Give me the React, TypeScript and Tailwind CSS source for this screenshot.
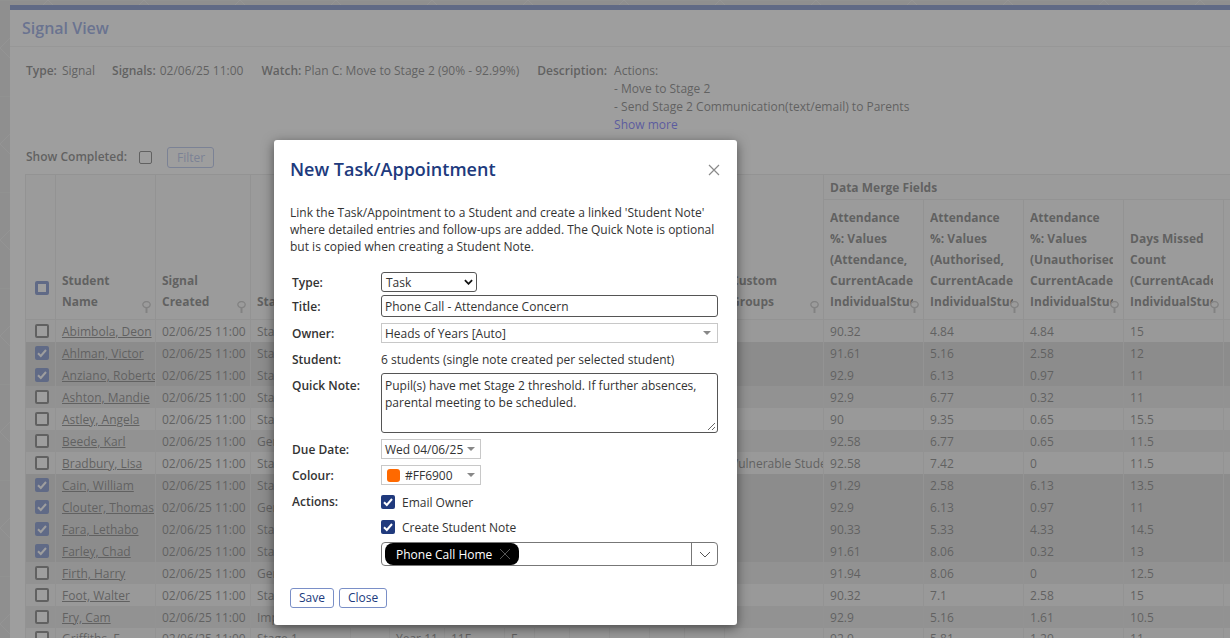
import type { ReactNode } from "react";

const rows: [string, string, string, string, string, string, boolean, string?][] = [
  ["Abimbola, Deon", "Stage 2", "90.32", "4.84", "4.84", "15", false],
  ["Ahlman, Victor", "Stage 2", "91.61", "5.16", "2.58", "12", true],
  ["Anziano, Roberto", "Stage 2", "92.9", "6.13", "0.97", "11", true],
  ["Ashton, Mandie", "Stage 2", "92.9", "6.77", "0.32", "11", false],
  ["Astley, Angela", "Stage 2", "90", "9.35", "0.65", "15.5", false],
  ["Beede, Karl", "General", "92.58", "6.77", "0.65", "11.5", false],
  ["Bradbury, Lisa", "Stage 2", "92.58", "7.42", "0", "11.5", false, "Vulnerable Students"],
  ["Cain, William", "Stage 2", "91.29", "2.58", "6.13", "13.5", true],
  ["Clouter, Thomas", "General", "92.9", "6.13", "0.97", "11", true],
  ["Fara, Lethabo", "Stage 2", "90.33", "5.33", "4.33", "14.5", true],
  ["Farley, Chad", "Stage 2", "91.61", "8.06", "0.32", "13", true],
  ["Firth, Harry", "General", "91.94", "8.06", "0", "12.5", false],
  ["Foot, Walter", "Stage 2", "90.32", "7.1", "2.58", "15", false],
  ["Fry, Cam", "Impact", "92.9", "5.16", "1.61", "10.5", false],
  ["Griffiths, F", "Stage 1", "92.9", "5.81", "1.29", "11", false],
];

const line = "border-[#d9d9d9]";

function Pin() {
  return (
    <svg viewBox="0 0 9 12" className="absolute right-[4px] bottom-[6px] h-[12px] w-[9px]">
      <ellipse cx="4.5" cy="3.6" rx="3.7" ry="3" fill="#f5f5f5" stroke="#a0a0a0" strokeWidth="1.3" />
      <path d="M4.5 7V12" stroke="#a0a0a0" strokeWidth="2" />
    </svg>
  );
}

function Check({ on, table = false }: { on: boolean; table?: boolean }) {
  return on ? (
    <span className={`${table ? "ml-[9px] bg-[#2f50b0]" : "bg-[#203a7d]"} flex h-[14px] w-[14px] shrink-0 items-center justify-center rounded-[2px]`}>
      <svg viewBox="0 0 14 14" className="h-[14px] w-[14px]">
        <path d="M3 7.2L5.8 10L11 4" fill="none" stroke="#fff" strokeWidth="2" />
      </svg>
    </span>
  ) : (
    <span className={`${table ? "ml-[9px]" : ""} block h-[14px] w-[14px] rounded-[2px] border-2 border-[#333] bg-white`} />
  );
}

function HeadCell({ children, rowSpan, pin = true }: { children?: ReactNode; rowSpan?: number; pin?: boolean }) {
  return (
    <th rowSpan={rowSpan} className={`relative border ${line} pb-[7px] pl-[6px] pr-[10px] text-left align-bottom font-bold whitespace-nowrap`}>
      <div className="overflow-hidden">{children}</div>
      {pin && <Pin />}
    </th>
  );
}

function Cell({ children }: { children?: ReactNode }) {
  return <td className={`overflow-hidden whitespace-nowrap border-x ${line} px-[6px] pt-[2px]`}>{children}</td>;
}

function Caret() {
  return <span className="h-0 w-0 border-x-[4px] border-t-[4px] border-x-transparent border-t-[#888]" />;
}

function Field({ label, className = "", children }: { label: string; className?: string; children: ReactNode }) {
  return (
    <div className={`flex items-center ${className}`}>
      <b className="w-[89px] shrink-0 font-semibold">{label}</b>
      <div className="w-[337px]">{children}</div>
    </div>
  );
}

export default function App() {
  return (
    <div className="relative h-[638px] w-[1230px] overflow-hidden bg-[#cbcdcb] text-[12px] leading-[18px] text-[#333] [font-family:'Open_Sans',sans-serif]">
      <svg className="absolute inset-0 h-full w-full">
        <defs>
          <pattern id="bgp" width="96" height="96" patternUnits="userSpaceOnUse">
            <path d="M0 48L48 0L96 48L48 96Z M0 0H96" fill="none" stroke="#fff" strokeOpacity="0.35" strokeWidth="1" />
          </pattern>
        </defs>
        <rect width="1230" height="638" fill="url(#bgp)" />
      </svg>
      <div className="relative ml-[10px] mt-[5px] h-[700px] w-[1300px] border-t-[5px] border-[#2f50aa] bg-white">
        <div className="flex h-[37px] items-center border-b border-[#e8e8e8] pl-[12px] text-[16px] font-semibold text-[#5070d0]">
          Signal View
        </div>
        <div className="flex pl-[16px] pt-[15px]">
          <b className="mr-[5px] font-semibold">Type:</b>
          <span className="mr-[17px]">Signal</span>
          <b className="mr-[4px] font-semibold">Signals:</b>
          <span className="mr-[18px]">02/06/25 11:00</span>
          <b className="mr-[3px] font-semibold">Watch:</b>
          <span className="mr-[18px]">Plan C: Move to Stage 2 (90% - 92.99%)</span>
          <b className="mr-[7px] font-semibold">Description:</b>
          <div>
            <div>Actions:</div>
            <div>- Move to Stage 2</div>
            <div>- Send Stage 2 Communication(text/email) to Parents</div>
            <div className="text-[#2020ff]">Show more</div>
          </div>
        </div>
        <div className="mt-[10px] flex h-[24px] items-center pl-[16px] pt-[2px]">
          <b className="mr-[12px] font-semibold">Show Completed:</b>
          <span className="mr-[15px] h-[13px] w-[13px] rounded-[2px] border border-[#333] bg-white" />
          <span className="rounded-[3px] border border-[#8aa0e0] pl-[9px] pr-[8px] leading-[19px] text-[#8aa0e0]">Filter</span>
        </div>
        <div className="pl-[15px] pt-[6px]">
          <table className={`w-[1298px] table-fixed border-collapse border ${line}`}>
            <colgroup>
              {[30, 100, 95, 100, 39, 55, 60, 30, 35, 40, 40, 35, 40, 99, 100, 100, 100, 100, 100].map((w, i) => (
                <col key={i} style={{ width: w }} />
              ))}
            </colgroup>
            <thead className="bg-[#f5f6f5] leading-[21px]">
              <tr className="h-[25px]">
                <th rowSpan={2} className={`border ${line} pb-[24px] align-bottom`}>
                  <span className="ml-[9px] block h-[14px] w-[14px] rounded-[2px] border-[3px] border-[#2f50b0] bg-white" />
                </th>
                <HeadCell rowSpan={2}>Student<br />Name</HeadCell>
                <HeadCell rowSpan={2}>Signal<br />Created</HeadCell>
                <HeadCell rowSpan={2}>Status</HeadCell>
                <th rowSpan={2} colSpan={9} className={`border ${line}`} />
                <HeadCell rowSpan={2}>Custom<br />Groups</HeadCell>
                <th colSpan={5} className={`border ${line} px-[6px] text-left font-bold`}>Data Merge Fields</th>
              </tr>
              <tr className="h-[120px]">
                <HeadCell>Attendance<br />%: Values<br />(Attendance,<br />CurrentAcademicYear,<br />IndividualStudent)</HeadCell>
                <HeadCell>Attendance<br />%: Values<br />(Authorised,<br />CurrentAcademicYear,<br />IndividualStudent)</HeadCell>
                <HeadCell>Attendance<br />%: Values<br />(Unauthorised,<br />CurrentAcademicYear,<br />IndividualStudent)</HeadCell>
                <HeadCell>Days Missed<br />Count<br />(CurrentAcademicYear,<br />IndividualStudent)</HeadCell>
                <HeadCell pin={false} />
              </tr>
            </thead>
            <tbody>
              {rows.map((r, i) => (
                <tr key={r[0]} className={`h-[22px] ${r[6] ? "bg-[#c4c4c4]" : i % 2 === 0 ? "bg-[#ededed]" : "bg-[#d8d8d8]"}`}>
                  <td className={`border-x ${line} p-0`}><Check on={r[6]} table /></td>
                  <td className={`overflow-hidden whitespace-nowrap border-x ${line} pl-[6px] pt-[2px] underline`}>{r[0]}</td>
                  <Cell>02/06/25 11:00</Cell>
                  <Cell>{r[1]}</Cell>
                  <Cell />
                  <Cell>{i === 14 ? "Year 11" : ""}</Cell>
                  <Cell>{i === 14 ? "11F" : ""}</Cell>
                  <Cell>{i === 14 ? "F" : ""}</Cell>
                  <Cell />
                  <Cell />
                  <Cell />
                  <Cell />
                  <Cell />
                  <td className={`overflow-hidden whitespace-nowrap border-x ${line} pl-[6px] pt-[2px]`}>{r[7] ?? ""}</td>
                  {[r[2], r[3], r[4], r[5], ""].map((v, j) => (
                    <Cell key={j}>{v}</Cell>
                  ))}
                </tr>
              ))}
            </tbody>
          </table>
        </div>
      </div>

      <div className="absolute inset-0 bg-[#757575]/70" />

      <div className="absolute left-[274px] top-[140px] h-[485px] w-[463px] rounded-[3px] bg-white px-[16px] leading-[17px] shadow-[0_3px_12px_rgba(0,0,0,0.5)]">
        <div className="flex items-center justify-between pt-[17px]">
          <h2 className="text-[18px] font-semibold leading-[25px] text-[#203a7d]">New Task/Appointment</h2>
          <svg viewBox="0 0 12 12" className="mr-[1px] h-[12px] w-[12px]">
            <path d="M1 1L11 11M11 1L1 11" stroke="#8a8a8a" strokeWidth="1.2" />
          </svg>
        </div>
        <p className="mt-[22px] w-[432px]">
          Link the Task/Appointment to a Student and create a linked 'Student Note' where detailed entries and follow-ups are added. The Quick Note is optional but is copied when creating a Student Note.
        </p>
        <div className="mt-[17px] pl-[2px]">
          <Field label="Type:">
            <div className="flex h-[20px] w-[96px] items-center justify-between rounded-[3px] border border-[#555] pl-[4px] pr-[3px]">
              Task
              <svg viewBox="0 0 10 6" className="h-[6px] w-[9px]"><path d="M1 1L5 5L9 1" fill="none" stroke="#111" strokeWidth="2" /></svg>
            </div>
          </Field>
          <Field label="Title:" className="mt-[3px]">
            <div className="flex h-[22px] items-center rounded-[3px] border border-[#555] pl-[3px]">Phone Call - Attendance Concern</div>
          </Field>
          <Field label="Owner:" className="mt-[6px]">
            <div className="flex h-[20px] items-center justify-between border border-[#c8c8c8] pl-[3px] pr-[6px]">
              Heads of Years [Auto]
              <Caret />
            </div>
          </Field>
          <Field label="Student:" className="mt-[8px]">
            <div className="h-[17px]">6 students (single note created per selected student)</div>
          </Field>
          <div className="mt-[5px] flex items-start">
            <b className="w-[89px] shrink-0 pt-[4px] font-semibold">Quick Note:</b>
            <div className="relative h-[60px] w-[337px] rounded-[3px] border border-[#555] px-[3px] pt-[3px]">
              Pupil(s) have met Stage 2 threshold. If further absences, parental meeting to be scheduled.
              <svg viewBox="0 0 9 9" className="absolute bottom-[1px] right-[1px] h-[9px] w-[9px]">
                <path d="M1 8L8 1M5 8L8 5" stroke="#666" strokeWidth="1" />
              </svg>
            </div>
          </div>
          <Field label="Due Date:" className="mt-[6px]">
            <div className="flex h-[20px] w-[100px] items-center justify-between border border-[#c8c8c8] pl-[3px] pr-[5px]">
              Wed 04/06/25
              <Caret />
            </div>
          </Field>
          <Field label="Colour:" className="mt-[6px]">
            <div className="flex h-[20px] w-[100px] items-center border border-[#c8c8c8] pl-[5px] pr-[5px]">
              <span className="mr-[5px] h-[13px] w-[13px] rounded-[3px] bg-[#ff6900]" />
              #FF6900
              <span className="ml-auto flex"><Caret /></span>
            </div>
          </Field>
          <div className="mt-[10px] flex items-start">
            <b className="-mt-[2px] w-[89px] shrink-0 font-semibold">Actions:</b>
            <div className="flex w-[337px] flex-col">
              <div className="flex h-[14px] items-center gap-[7px]"><Check on={true} /><span>Email Owner</span></div>
              <div className="mt-[11px] flex h-[14px] items-center gap-[7px]"><Check on={true} /><span>Create Student Note</span></div>
              <div className="mt-[8px] flex h-[24px] items-center rounded-[4px] border border-[#777] pl-[3px]">
                <span className="flex h-[22px] items-center gap-[7px] rounded-[8px] bg-black pl-[11px] pr-[8px] text-white">
                  Phone Call Home
                  <svg viewBox="0 0 12 12" className="h-[12px] w-[12px]"><path d="M1 1L11 11M11 1L1 11" stroke="#555" strokeWidth="1" /></svg>
                </span>
                <span className="ml-auto flex h-full w-[26px] items-center justify-center border-l border-[#777]">
                  <svg viewBox="0 0 12 7" className="h-[7px] w-[12px]"><path d="M1 1L6 6L11 1" fill="none" stroke="#555" strokeWidth="1" /></svg>
                </span>
              </div>
            </div>
          </div>
        </div>
        <div className="mt-[22px] flex gap-[5px]">
          <span className="rounded-[3px] border border-[#7a8fc7] px-[8px] leading-[18px] text-[#203a7d]">Save</span>
          <span className="rounded-[3px] border border-[#7a8fc7] px-[8px] leading-[18px] text-[#203a7d]">Close</span>
        </div>
      </div>
    </div>
  );
}
